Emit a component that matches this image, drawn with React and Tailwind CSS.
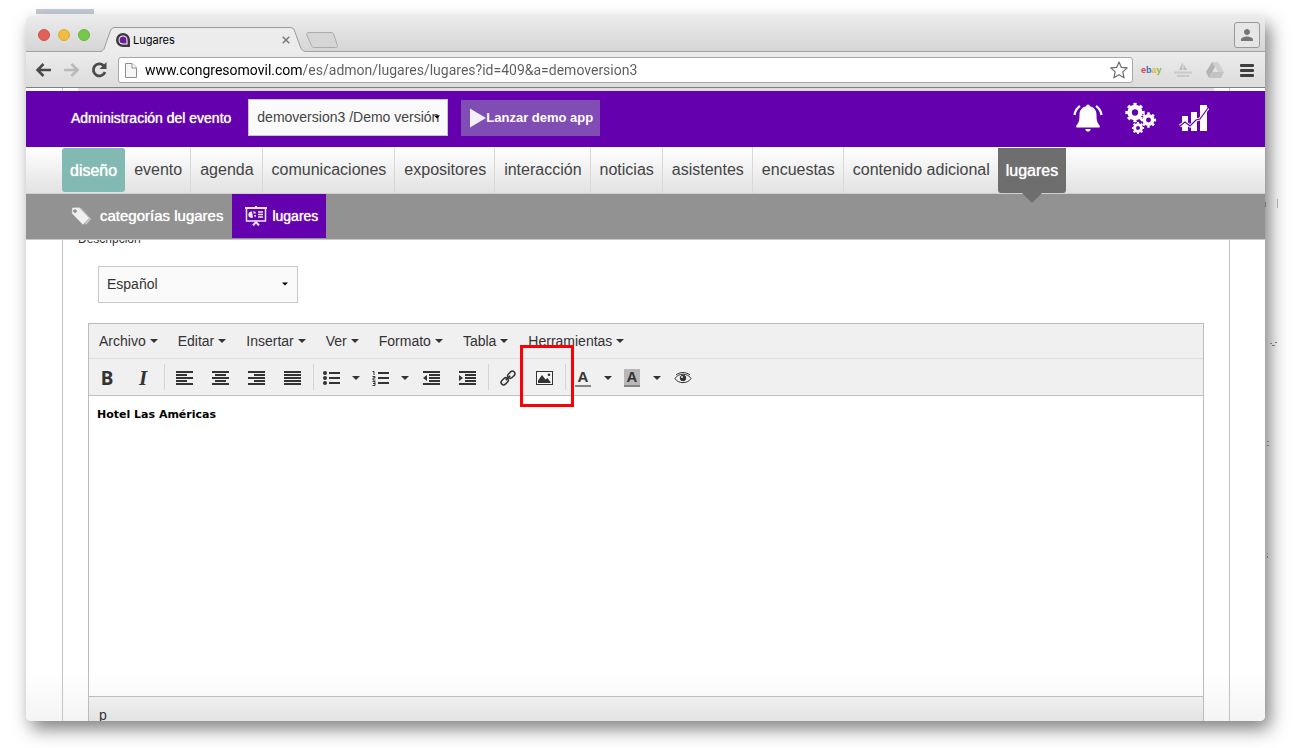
import { MdPerson } from 'react-icons/md';

const sections = ['evento', 'agenda', 'comunicaciones', 'expositores', 'interacción', 'noticias', 'asistentes', 'encuestas', 'contenido adicional'];
const menus = ['Archivo', 'Editar', 'Insertar', 'Ver', 'Formato', 'Tabla', 'Herramientas'];

function Caret({ className = '' }) {
  return (
    <svg className={`w-2 h-1 ${className}`} viewBox="0 0 8 4" fill="currentColor" aria-hidden="true">
      <path d="M0 0h8L4 4z" />
    </svg>
  );
}

function Gear({ cx, cy, r, teeth = 8 }) {
  return (
    <g fill="none" stroke="#fff">
      <circle cx={cx} cy={cy} r={r * 0.57} strokeWidth={r * 0.48} />
      <circle cx={cx} cy={cy} r={r * 0.88} strokeWidth={r * 0.28} pathLength={teeth * 2} strokeDasharray="1 1" strokeDashoffset="0.5" />
    </g>
  );
}

function TabStrip() {
  return (
    <div className="flex h-9 shrink-0 items-end border-b border-[#a3a3a3] bg-linear-to-b from-[#ececec] to-[#d5d5d5] pl-3">
      <div className="flex gap-2 pb-[10px]">
        <span className="size-3 rounded-full border border-[#cf5349] bg-[#df6158]" />
        <span className="size-3 rounded-full border border-[#dda934] bg-[#efbd41]" />
        <span className="size-3 rounded-full border border-[#66b53c] bg-[#75c94c]" />
      </div>
      <div className="relative -mb-px ml-[10px] flex h-[25px] w-[206px] items-center pl-4 pr-4 pt-px">
        <svg className="absolute inset-0 size-full" viewBox="0 0 206 25" preserveAspectRatio="none" aria-hidden="true">
          <path d="M0 24.5C4 24 4 22 5 19L10 5C11 2 12 .5 15 .5H190C193 .5 194 2 195 5L200 19C201 22 202 24 206 24.5V25H0z" fill="#ececec" />
          <path d="M0 24.5C4 24 4 22 5 19L10 5C11 2 12 .5 15 .5H190C193 .5 194 2 195 5L200 19C201 22 202 24 206 24.5" fill="none" stroke="#9b9b9b" />
        </svg>
        <svg className="relative size-[14px]" viewBox="0 0 14 14" aria-hidden="true">
          <path d="M7 0a7 7 0 0 1 7 7v7H7A7 7 0 0 1 7 0z" fill="#3a3a3c" />
          <path d="M7 2.500a4.500 4.500 0 0 1 4.500 4.500v4.500H7a4.500 4.500 0 0 1 0-9z" fill="#fff" />
          <path d="M7 3.500a3.500 3.500 0 0 1 3.500 3.500v3.500H7a3.500 3.500 0 0 1 0-7z" fill="#6c1b9c" />
        </svg>
        <span className="relative ml-[3px] flex-1 font-[Inter,sans-serif] text-[11px] text-black">Lugares</span>
        <button aria-label="Cerrar pestaña" className="relative">
          <svg className="size-2" viewBox="0 0 8 8" stroke="#7a7a7a" strokeWidth="1.500" aria-hidden="true"><path d="M.7.7l6.600 6.600M7.300.7L.7 7.300" /></svg>
        </button>
      </div>
      <button aria-label="Nueva pestaña" className="mb-[3px]">
        <svg className="h-4 w-8" viewBox="0 0 32 16" aria-hidden="true">
          <path d="M3 .5H25C27 .5 27.500 1.500 28 3L31.300 13C31.700 15 31 15.500 29.500 15.500H9C7 15.500 6 15 5.500 13.500L.8 3C.3 1.500 1 .5 3 .5z" fill="#d6d6d6" stroke="#ababab" />
        </svg>
      </button>
      <button aria-label="Usuario" className="mb-[3px] ml-auto mr-[5px] flex size-[26px] items-center justify-center rounded-[3px] border border-[#999] bg-[#e6e6e6] text-[#757575]">
        <MdPerson size={18} />
      </button>
    </div>
  );
}

function AddressBar() {
  return (
    <div className="flex h-9 shrink-0 items-center border-b border-[#808080] bg-linear-to-b from-[#ececec] to-[#dcdcdc] px-2">
      <button aria-label="Atrás">
        <svg className="size-5" viewBox="0 0 20 20" fill="none" stroke="#4a4a4a" strokeWidth="2.500" aria-hidden="true"><path d="M17 10H4M9.500 4L3.500 10l6 6" /></svg>
      </button>
      <button aria-label="Adelante" className="ml-[7px]">
        <svg className="size-5" viewBox="0 0 20 20" fill="none" stroke="#b9b9b9" strokeWidth="2.500" aria-hidden="true"><path d="M3 10h13M10.500 4l6 6-6 6" /></svg>
      </button>
      <button aria-label="Recargar" className="ml-2">
        <svg className="size-5" viewBox="0 0 20 20" fill="none" aria-hidden="true">
          <path d="M14.500 5.500A6 6 0 1 0 16 12" stroke="#4a4a4a" strokeWidth="2.800" />
          <path d="M17.500 2v7h-7z" fill="#4a4a4a" />
        </svg>
      </button>
      <div className="ml-[9px] flex h-[26px] flex-1 items-center rounded-[3px] border border-[#a6a6a6] bg-white pl-[6px] pr-1">
        <svg className="h-4 w-3" viewBox="0 0 12 16" fill="#f6f6f6" stroke="#8d8d8d" aria-hidden="true">
          <path d="M.5 1.500h6.500l4.500 4.500v9.500H.5z" />
          <path d="M7 1.500V6h4.500" fill="#fff" />
        </svg>
        <input
          aria-label="Dirección"
          defaultValue="www.congresomovil.com/es/admon/lugares/lugares?id=409&a=demoversion3"
          className="ml-2 min-w-0 flex-1 bg-[linear-gradient(90deg,#000_157px,#5c5c5c_157px)] bg-clip-text font-[Roboto,sans-serif] text-[14px] leading-5 text-transparent outline-none"
        />
        <svg className="size-[18px]" viewBox="0 0 18 18" fill="#fff" stroke="#6b6b6b" strokeWidth="1.200" strokeLinejoin="round" aria-hidden="true">
          <path d="M9 1l2.300 5.300 5.900.6-4.400 4 1.300 5.900L9 13.800l-5.100 3 1.300-5.900-4.400-4 5.900-.6z" />
        </svg>
      </div>
      <div className="ml-2 flex items-center gap-3">
        <span className="w-5 text-center text-[9px] font-bold leading-4">
          <span className="text-[#d8404a]">e</span><span className="text-[#3a6cc0]">b</span><span className="text-[#e9b43a]">a</span><span className="text-[#8db92e]">y</span>
        </span>
        <svg className="h-4 w-5" viewBox="0 0 20 16" fill="#bdbdbd" aria-hidden="true">
          <path d="M9.500 0L6 8h3.500zM10.500 2v6H14z" />
          <path d="M1 9.500h18v2H1zM4 13h12v2H4z" opacity=".7" />
        </svg>
        <svg className="h-5 w-5" viewBox="0 0 20 20" aria-hidden="true">
          <path d="M7 2h6l6 10h-6z" fill="#d0d0d0" />
          <path d="M7 2L1 12l3 6 6-11z" fill="#b3b3b3" />
          <path d="M7 12h12l-3 6H4z" fill="#c3c3c3" />
        </svg>
        <button aria-label="Menú" className="flex w-5 justify-center">
          <svg className="h-[14px] w-[14px]" viewBox="0 0 14 14" fill="#3f3f3f" aria-hidden="true">
            <rect y="1" width="14" height="3" rx="1" />
            <rect y="6" width="14" height="3" rx="1" />
            <rect y="11" width="14" height="3" rx="1" />
          </svg>
        </button>
      </div>
    </div>
  );
}

function EventHeader() {
  return (
    <header className="flex h-14 shrink-0 items-center bg-[#6400ae] pb-[3px] pl-[45px] pr-14 text-white">
      <label htmlFor="evento" className="text-[14px] leading-5 [text-shadow:0_0_1px_#fff]">Administración del evento</label>
      <div className="relative ml-[17px]">
        <select id="evento" className="block h-[37px] w-[200px] appearance-none border border-[#c6c6c6] bg-[#fafafa] px-2 text-[14px] text-[#444]">
          <option>demoversion3 /Demo versión</option>
        </select>
        <Caret className="pointer-events-none absolute right-2 top-4 w-[6px] text-black" />
      </div>
      <button className="ml-[13px] flex h-9 items-center bg-[#7f4db3] pl-[9px] pr-[7px] text-[13px] font-bold leading-5">
        <svg className="h-5 w-4" viewBox="0 0 16 20" fill="#f4eefa" aria-hidden="true"><path d="M0 .5L16 10 0 19.500z" /></svg>
        Lanzar demo app
      </button>
      <div className="ml-auto flex items-center gap-[22px]">
        <button aria-label="Notificaciones">
          <svg className="h-[30px] w-[30px]" viewBox="0 0 30 30" fill="#fff" aria-hidden="true">
            <path d="M15 1.500a2 2 0 0 1 2 1.800c4 .9 6.500 4.200 6.500 8.200 0 6 .8 8.500 3.200 11v2H3.300v-2c2.400-2.500 3.200-5 3.200-11 0-4 2.500-7.300 6.500-8.200a2 2 0 0 1 2-1.800zM12.300 26h5.400c-.4 1.800-1.400 2.600-2.700 2.600s-2.300-.8-2.700-2.600z" />
            <path d="M1.500 12C2 8.500 4 5 7 3M28.500 12C28 8.500 26 5 23 3" fill="none" stroke="#fff" strokeWidth="2.200" />
          </svg>
        </button>
        <button aria-label="Configuración">
          <svg className="h-8 w-8" viewBox="0 0 32 32" aria-hidden="true">
            <Gear cx={10} cy={10.5} r={9.5} />
            <Gear cx={23.5} cy={18} r={7.5} />
            <Gear cx={13} cy={26} r={6} />
          </svg>
        </button>
        <button aria-label="Estadísticas">
          <svg className="h-[26px] w-[30px]" viewBox="0 0 30 26" aria-hidden="true">
            <path d="M3 11h6v15H3zM12 7h6v19h-6zM21 0h7v26h-7z" fill="#fff" />
            <path d="M1 21l5-4 5 4 6-6 4-1 8-11" fill="none" stroke="#fff" strokeWidth="3" />
            <path d="M1 21l5-4 5 4 6-6 4-1 8-11" fill="none" stroke="#6400ae" strokeWidth="1.200" />
          </svg>
        </button>
      </div>
    </header>
  );
}

function SectionNav() {
  return (
    <nav className="flex h-[47px] shrink-0 border-b border-[#cfcfcf] bg-linear-to-b from-white to-[#e2e2e2] pl-9 text-[16px] leading-[45px] text-[#444]">
      <a href="#diseno" className="mt-px mb-px rounded-[3px] bg-[#82b9b2] px-2 text-white [text-shadow:0_0_1px_#fff]">diseño</a>
      {sections.map((name, i) => (
        <a key={name} href={`#${name}`} className={`pl-[9px] pr-2 ${i > 0 ? 'border-l border-[#d8d8d8]' : ''}`}>{name}</a>
      ))}
      <a href="#lugares" className="relative mt-px rounded-b-[3px] bg-[#6e6e6e] px-2 text-white [text-shadow:0_0_1px_#fff]">
        lugares
        <svg className="absolute left-1/2 top-full h-[10px] w-5 -translate-x-1/2" viewBox="0 0 20 10" fill="#6e6e6e" aria-hidden="true">
          <path d="M0 0h20L10 10z" />
        </svg>
      </a>
    </nav>
  );
}

function SubNav() {
  return (
    <nav className="flex h-[46px] shrink-0 border-b border-[#c9c9c9] bg-[#929292] pb-px pl-9 text-white [text-shadow:0_0_1px_#fff]">
      <a href="#categorias" className="flex items-center px-[9px] text-[15px] leading-5">
        <svg className="mr-[9px] h-5 w-5" viewBox="0 0 20 20" aria-hidden="true">
          <path d="M6 1.500l4 .5 10 11-5 6z" fill="#c9c9c9" />
          <path fillRule="evenodd" d="M1 1.500l7-.2L18.500 12 12 19 .8 7.500zM4 3.500a1.600 1.600 0 1 0 .1 0z" fill="#f0f0f0" stroke="#929292" strokeWidth=".5" />
        </svg>
        categorías lugares
      </a>
      <a href="#lugares-lista" className="flex items-center bg-[#6400ae] pl-[13px] pr-2 text-[14px] leading-5">
        <svg className="mr-[5px] h-5 w-[22px]" viewBox="0 0 22 20" fill="none" stroke="#efe6f7" aria-hidden="true">
          <path d="M0 2h22M11 0v2M8 19.500l3-3.500 3 3.500" strokeWidth="2" />
          <path d="M1.500 2v13h19V2" strokeWidth="1.500" />
          <path d="M13 6h5M13 8.500h5M13 11h5" strokeWidth="1.500" />
          <path d="M7 5.500a3.200 3.200 0 1 0 1 6L7.500 8.500zM8.500 5a3 3 0 0 1 2.500 2.500H8.500zM9 9h2a3 3 0 0 1-1 2.500z" fill="#efe6f7" stroke="none" />
        </svg>
        lugares
      </a>
    </nav>
  );
}

function ToolButton({ label, children, className = 'w-9' }) {
  return (
    <button aria-label={label} className={`relative flex h-9 items-center justify-center pt-[2px] ${className}`}>
      {children}
    </button>
  );
}

function SplitButton({ label, children }) {
  return (
    <>
      <ToolButton label={label} className="w-8">{children}</ToolButton>
      <ToolButton label={`${label}, opciones`} className="w-[17px]"><Caret /></ToolButton>
    </>
  );
}

function Separator() {
  return <span className="my-[5px] ml-[3px] mr-px w-px bg-[#d5d5d5]" />;
}

function Lines({ d, children }) {
  return (
    <svg className="h-[15px] w-[17px]" viewBox="0 0 17 15" fill="currentColor" aria-hidden="true">
      <path d={d} />
      {children}
    </svg>
  );
}

function Toolbar() {
  return (
    <div className="flex border-b border-[#c0c0c0] text-[#333]">
      <ToolButton label="Negrita"><span className="font-['Noto_Sans',sans-serif] text-[19px] font-bold leading-5">B</span></ToolButton>
      <ToolButton label="Cursiva"><span className="font-['Liberation_Serif',serif] text-[21px] font-bold italic leading-5">I</span></ToolButton>
      <Separator />
      <ToolButton label="Alinear a la izquierda"><Lines d="M0 0h17v2H0zM0 3h11v2H0zM0 6h17v2H0zM0 9h11v2H0zM0 12h17v2H0z" /></ToolButton>
      <ToolButton label="Centrar"><Lines d="M0 0h17v2H0zM3 3h11v2H3zM0 6h17v2H0zM3 9h11v2H3zM0 12h17v2H0z" /></ToolButton>
      <ToolButton label="Alinear a la derecha"><Lines d="M0 0h17v2H0zM6 3h11v2H6zM0 6h17v2H0zM6 9h11v2H6zM0 12h17v2H0z" /></ToolButton>
      <ToolButton label="Justificar"><Lines d="M0 0h17v2H0zM0 3h17v2H0zM0 6h17v2H0zM0 9h17v2H0zM0 12h17v2H0z" /></ToolButton>
      <Separator />
      <SplitButton label="Lista">
        <Lines d="M6 1h11v2H6zM6 6h11v2H6zM6 11h11v2H6z">
          <circle cx="2" cy="2" r="2" /><circle cx="2" cy="7" r="2" /><circle cx="2" cy="12" r="2" />
        </Lines>
      </SplitButton>
      <SplitButton label="Lista numerada">
        <Lines d="M6 1h11v2H6zM6 6h11v2H6zM6 11h11v2H6z">
          <path d="M.5 .5h1.500V4M.5 5.500h2.500v1.500H1v2h2.500M.5 10.500h2.500v4H.5M1 12.500h2" fill="none" stroke="currentColor" />
        </Lines>
      </SplitButton>
      <ToolButton label="Disminuir sangría"><Lines d="M0 0h17v2H0zM6 3h11v2H6zM6 6h11v2H6zM6 9h11v2H6zM0 12h17v2H0zM0 7l4-3v6z" /></ToolButton>
      <ToolButton label="Aumentar sangría"><Lines d="M0 0h17v2H0zM6 3h11v2H6zM6 6h11v2H6zM6 9h11v2H6zM0 12h17v2H0zM4 7L0 4v6z" /></ToolButton>
      <Separator />
      <ToolButton label="Insertar enlace">
        <svg className="size-4" viewBox="0 0 16 16" fill="none" stroke="currentColor" strokeWidth="1.500" aria-hidden="true">
          <rect x="-4" y="-2.500" width="8" height="5" rx="2.500" transform="translate(11.300 4.700) rotate(-45)" />
          <rect x="-4" y="-2.500" width="8" height="5" rx="2.500" transform="translate(4.700 11.300) rotate(-45)" />
          <path d="M5.800 10.200l4.400-4.400" />
        </svg>
      </ToolButton>
      <ToolButton label="Insertar imagen">
        <svg className="h-[14px] w-[17px]" viewBox="0 0 17 14" aria-hidden="true">
          <rect x=".5" y=".5" width="16" height="13" fill="#f6f6f6" stroke="#333" />
          <path d="M2 12V9.500L6 4l3.500 4.500L11.500 7l3 4v1z" fill="#333" />
          <circle cx="13" cy="3.800" r="1.300" fill="#333" />
        </svg>
        <span className="pointer-events-none absolute -left-1.5 -top-3.5 z-10 h-[62px] w-[54px] border-[3px] border-[#fb0007]" />
      </ToolButton>
      <Separator />
      <SplitButton label="Color de texto">
        <span className="w-4 border-b-2 border-[#858585] text-center text-[15px] font-bold leading-4">A</span>
      </SplitButton>
      <SplitButton label="Color de fondo">
        <span className="w-4 border-b-2 border-[#858585] bg-[#b8b8b8] text-center text-[15px] font-bold leading-4">A</span>
      </SplitButton>
      <ToolButton label="Vista previa">
        <svg className="h-3 w-[18px]" viewBox="0 0 18 12" fill="none" stroke="currentColor" aria-hidden="true">
          <path d="M1 6.500C4 .8 14 .8 17 6.500 14 12 4 12 1 6.500zM2 3C6-.3 12-.3 16 3" />
          <circle cx="9" cy="6" r="2.800" fill="currentColor" />
          <circle cx="8" cy="5" r="1" fill="#f0f0f0" stroke="none" />
        </svg>
      </ToolButton>
    </div>
  );
}

function Editor() {
  return (
    <div className="mx-[25px] mt-5 flex flex-1 flex-col border border-b-0 border-[#bcbcbc]">
      <div className="bg-[#f0f0f0]">
        <div className="flex h-[35px] items-center gap-5 border-b border-[#dedede] pl-[10px] text-[14px] leading-5 text-[#333]">
          {menus.map((m) => (
            <button key={m} className="flex items-center gap-1">{m}<Caret /></button>
          ))}
        </div>
        <Toolbar />
      </div>
      <div contentEditable suppressContentEditableWarning role="textbox" aria-label="Descripción" className="flex-1 px-2 pt-[11px] font-['DejaVu_Sans',sans-serif] text-[11px] leading-4 text-black outline-none">
        <p className="font-bold">Hotel Las Américas</p>
      </div>
      <div className="h-[25px] border-t border-[#bcbcbc] bg-linear-to-b from-[#f0f0f0] to-[#e3e3e3] px-[10px] pt-[11px] text-[14px] leading-[14px] text-[#333]">p</div>
    </div>
  );
}

export default function App() {
  return (
    <div className="relative flex h-screen flex-col overflow-hidden bg-white pb-[27px] pl-[26px] pr-[35px] pt-4 font-['Liberation_Sans',Arial,sans-serif]">
      <span className="absolute left-9 top-[9px] h-[5px] w-[58px] bg-[#c3ccd5]" />
      <div className="relative flex flex-1 flex-col overflow-hidden rounded-[5px] bg-white shadow-[5px_8px_18px_rgba(0,0,0,0.5)]">
        <TabStrip />
        <AddressBar />
        {/* page content scrolled behind the fixed header */}
        <div className="flex h-[3px] shrink-0 bg-white pl-9 pr-[35px]">
          <div className="flex-1 border-x border-[#c4c4c4] px-[15px]">
            <div className="h-full bg-[#dedede]" />
          </div>
        </div>
        <EventHeader />
        <SectionNav />
        <SubNav />
        <main className="flex flex-1 flex-col overflow-hidden bg-linear-to-b from-white from-90% to-[#f4f4f4] pl-9 pr-[35px]">
          <div className="flex flex-1 flex-col border-x border-[#c4c4c4]">
            <label htmlFor="idioma" className="-mt-[9px] ml-[15px] text-[12px] leading-4 text-[#333]">Descripción</label>
            <div className="relative ml-[35px] mt-[19px] w-[200px]">
              <select id="idioma" className="block h-[37px] w-full appearance-none border border-[#c8c8c8] bg-[#fafafa] px-2 text-[14px] text-[#333]">
                <option>Español</option>
              </select>
              <Caret className="pointer-events-none absolute right-[10px] top-4 w-[6px] text-black" />
            </div>
            <Editor />
          </div>
        </main>
      </div>
      {/* stray marks of the page behind the window */}
      <svg className="absolute right-[15px] top-[190px] h-[370px] w-5" viewBox="0 0 20 370" fill="#777" aria-hidden="true">
        <path d="M12 9h1v9h-1z" fill="#aaa" />
        <path d="M0 12h1v5H0zM2 251h2v1H2zM2 255h2v1H2zM2 363h1v1H2zM2 366h1v2H2zM7 155h3v1H7zM5 153h2v1H5zM10 152h2v1h-2z" />
      </svg>
    </div>
  );
}
